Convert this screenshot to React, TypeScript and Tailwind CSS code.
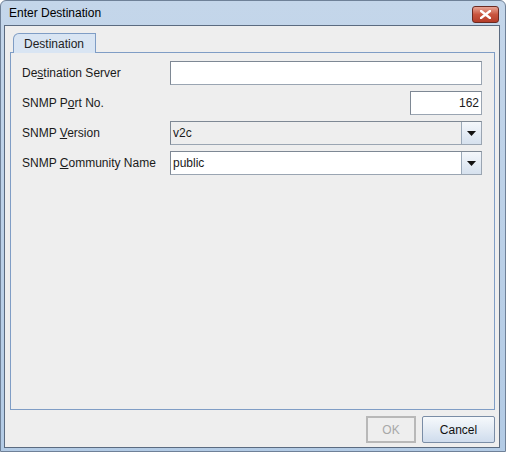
import React from 'react';

const font = { fontFamily: '"Liberation Sans", Arial, sans-serif' };

function Arrow() {
  return (
    <div className="w-[20px] h-full flex items-center justify-center border-l border-[#9aa8b8] bg-gradient-to-b from-[#f4f7fb] to-[#d6e1ee]">
      <svg width="9" height="5" viewBox="0 0 9 5">
        <path d="M0 0 H9 L4.5 5 Z" fill="#111" />
      </svg>
    </div>
  );
}

export default function App() {
  return (
    <div
      className="w-[506px] h-[452px] flex flex-col bg-gradient-to-b from-[#c4d6ea] to-[#b3cbe5] border border-[#6f8198] rounded-t-[6px] overflow-hidden text-[12px] text-[#1a1a1a]"
      style={font}
    >
      {/* title bar */}
      <div className="h-[24px] flex items-center justify-between pl-[8px] pr-[6px] shrink-0">
        <span className="text-[12px] text-black">Enter Destination</span>
        <div className="w-[27px] h-[17px] mt-[2px] rounded-[3px] border border-[#6b2a22] bg-gradient-to-b from-[#e7a496] via-[#c9553f] to-[#b43d2a] flex items-center justify-center">
          <svg width="11" height="9" viewBox="0 0 11 9">
            <path d="M1 1 L10 8 M10 1 L1 8" stroke="#fff" strokeWidth="2.4" strokeLinecap="square" />
          </svg>
        </div>
      </div>

      {/* content */}
      <div className="flex-1 ml-[3px] mr-[5px] mb-[4px] border border-[#5b6b80] bg-[#eeeeee] flex flex-col pt-[6px] pl-[5px] pr-[4px] pb-[4px]">
        {/* tab */}
        <div className="flex pl-[3px]">
          <div className="h-[20px] w-[83px] flex items-center pl-[10px] bg-[#d9e5f3] border border-b-0 border-[#7f9dc5] rounded-tl-[6px] text-[#222] relative top-[1px]">
            Destination
          </div>
        </div>
        {/* panel */}
        <div className="h-[358px] border border-[#7f9dc5] flex flex-col gap-[6px] pt-[8px] pl-[11px] pr-[12px]">
          <div className="flex items-center h-[24px]">
            <span className="w-[148px]">De<u>s</u>tination Server</span>
            <div className="flex-1 h-full bg-white border border-[#9aa5b2] border-t-[#7e8894] border-l-[#7e8894]" />
          </div>
          <div className="flex items-center h-[24px]">
            <span className="flex-1">SNMP P<u>o</u>rt No.</span>
            <div className="w-[72px] h-full bg-white border border-[#9aa5b2] border-t-[#7e8894] border-l-[#7e8894] flex items-center justify-end pr-[2px]">
              162
            </div>
          </div>
          <div className="flex items-center h-[24px] -mt-[0px]">
            <span className="w-[148px]">SNMP <u>V</u>ersion</span>
            <div className="flex-1 h-full bg-[#eeeeee] border border-[#9aa5b2] border-t-[#7e8894] border-l-[#7e8894] flex items-center">
              <span className="flex-1 pl-[2px]">v2c</span>
              <Arrow />
            </div>
          </div>
          <div className="flex items-center h-[24px]">
            <span className="w-[148px]">SNMP <u>C</u>ommunity Name</span>
            <div className="flex-1 h-full bg-white border border-[#9aa5b2] border-t-[#7e8894] border-l-[#7e8894] flex items-center">
              <span className="flex-1 pl-[2px]">public</span>
              <Arrow />
            </div>
          </div>
        </div>
        {/* buttons */}
        <div className="flex justify-end gap-[6px] mt-[6px]">
          <div className="w-[50px] h-[27px] border-2 border-[#b8b8b8] flex items-center justify-center text-[#a8a8a8]">
            OK
          </div>
          <div className="w-[73px] h-[27px] border border-[#7a8da6] rounded-[2px] bg-gradient-to-b from-[#f6f9fc] via-[#e3ebf4] to-[#cfdced] flex items-center justify-center text-[#111]">
            Cancel
          </div>
        </div>
      </div>
    </div>
  );
}
